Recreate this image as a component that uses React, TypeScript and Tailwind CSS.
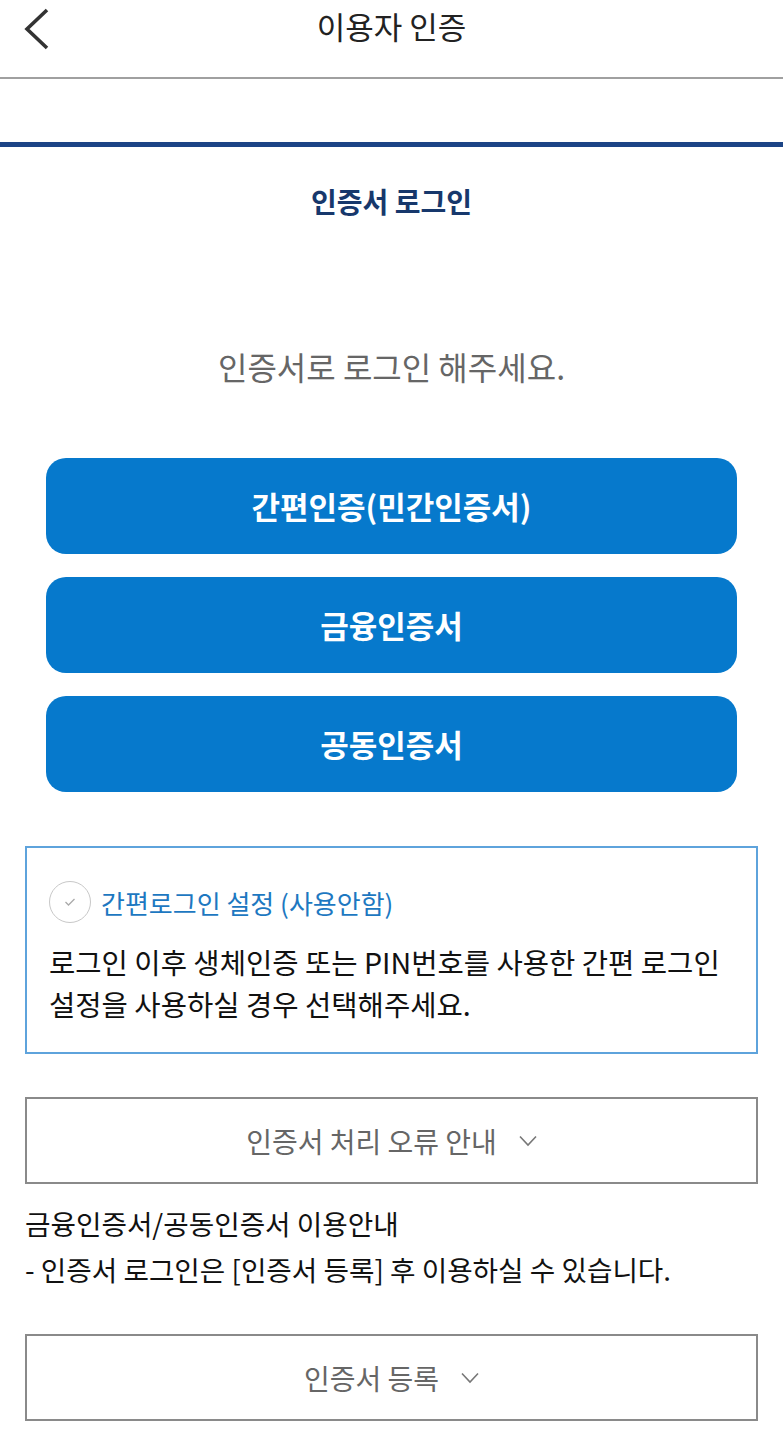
const font = { fontFamily: '"Noto Sans CJK KR", "Noto Sans", sans-serif' }

// 인증 방식 버튼 목록
const methods = ['간편인증(민간인증서)', '금융인증서', '공동인증서']

function Caret() {
  return (
    <svg width="18" height="12" viewBox="0 0 18 12" fill="none" stroke="#777" strokeWidth="1.6">
      <polyline points="1,1.5 9,10 17,1.5" />
    </svg>
  )
}

function Accordion({ label }: { label: string }) {
  return (
    <button className="flex h-[87px] w-full items-center justify-center gap-[22px] border-2 border-[#8a8a8a] bg-white text-[28px] text-[#666]">
      <span>{label}</span>
      <Caret />
    </button>
  )
}

export default function App() {
  return (
    <div className="min-h-[1440px] bg-white" style={font}>
      <header className="relative flex h-[79px] items-start justify-center border-b-2 border-[#a0a0a0]">
        <button className="absolute left-[22px] top-[8px]" aria-label="뒤로">
          <svg width="30" height="42" viewBox="0 0 30 42" fill="none" stroke="#333" strokeWidth="3.6">
            <polyline points="25,2 5,21 25,40" />
          </svg>
        </button>
        <h1 className="mt-[3px] text-[31px] leading-[45px] text-[#222]">이용자 인증</h1>
      </header>

      <div className="mt-[63px] h-[5px] bg-[#1c4486]" />

      <h2 className="mt-[33px] text-center text-[28px] font-bold text-[#17386c]">인증서 로그인</h2>

      <p className="mt-[120px] text-center text-[32px] leading-[48px] text-[#666]">인증서로 로그인 해주세요.</p>

      <div className="mt-[68px] flex flex-col gap-[23px] px-[46px]">
        {methods.map((m) => (
          <button
            key={m}
            className="h-[96px] w-full rounded-[20px] bg-[#0679cc] text-[31px] font-bold text-white"
          >
            {m}
          </button>
        ))}
      </div>

      <div className="mx-[25px] mt-[54px] border-2 border-[#5ea3dc] px-[22px] pt-[33px] pb-[27px]">
        <label className="flex h-[42px] items-center gap-[10px]">
          <span className="flex h-[42px] w-[42px] items-center justify-center rounded-full border border-[#c8c8c8]">
            <svg width="12" height="10" viewBox="0 0 12 10" fill="none" stroke="#aaa" strokeWidth="1.3">
              <polyline points="1.5,5 4.5,8 10.5,2" />
            </svg>
          </span>
          <span className="text-[26px] text-[#1d78c1]">간편로그인 설정 (사용안함)</span>
        </label>
        <p className="mt-[18px] break-keep text-[28.6px] leading-[42px] text-[#111]">
          로그인 이후 생체인증 또는 PIN번호를 사용한 간편 로그인 설정을 사용하실 경우 선택해주세요.
        </p>
      </div>

      <div className="mx-[25px] mt-[43px]">
        <Accordion label="인증서 처리 오류 안내" />
      </div>

      <div className="mx-[25px] mt-[16px] text-[27.7px] leading-[46px] text-[#111]">
        <p>금융인증서/공동인증서 이용안내</p>
        <p>- 인증서 로그인은 [인증서 등록] 후 이용하실 수 있습니다.</p>
      </div>

      <div className="mx-[25px] mt-[42px]">
        <Accordion label="인증서 등록" />
      </div>
    </div>
  )
}
